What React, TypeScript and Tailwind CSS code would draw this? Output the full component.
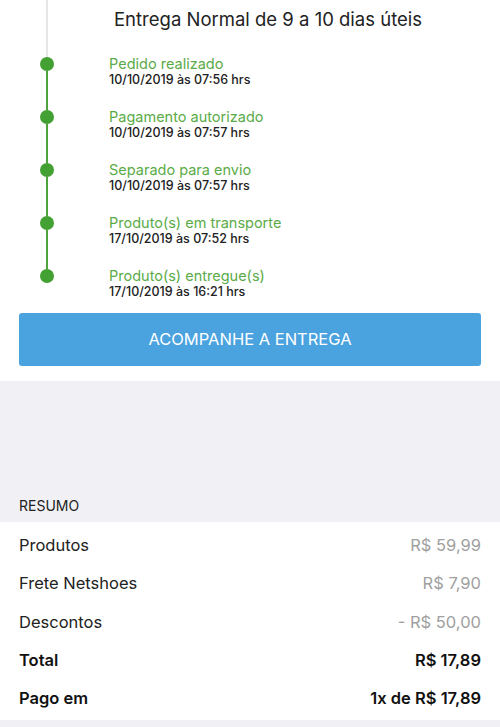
import React from "react";

type Step = { label: string; date: string };

const steps: Step[] = [
  { label: "Pedido realizado", date: "10/10/2019 às 07:56 hrs" },
  { label: "Pagamento autorizado", date: "10/10/2019 às 07:57 hrs" },
  { label: "Separado para envio", date: "10/10/2019 às 07:57 hrs" },
  { label: "Produto(s) em transporte", date: "17/10/2019 às 07:52 hrs" },
  { label: "Produto(s) entregue(s)", date: "17/10/2019 às 16:21 hrs" },
];

type Row = { label: string; value: string; strong?: boolean };

const summary: Row[] = [
  { label: "Produtos", value: "R$ 59,99" },
  { label: "Frete Netshoes", value: "R$ 7,90" },
  { label: "Descontos", value: "- R$ 50,00" },
  { label: "Total", value: "R$ 17,89", strong: true },
  { label: "Pago em", value: "1x de R$ 17,89", strong: true },
];

function TimelineStep({ step, first, last }: { step: Step; first: boolean; last: boolean }) {
  return (
    <div className="flex h-[53px]">
      <div className="flex w-[94px] shrink-0 flex-col items-center">
        <div className={`h-[17px] w-[2px] ${first ? "bg-[#e6e6e6]" : "bg-[#4ea43c]"}`} />
        <div className="h-[14px] w-[14px] shrink-0 rounded-full bg-[#43a032]" />
        <div className={`w-[2px] flex-1 ${last ? "" : "bg-[#4ea43c]"}`} />
      </div>
      <div className="pt-[16px] pl-[15px]">
        <div className="text-[14.5px] leading-[16px] text-[#5aab47]">{step.label}</div>
        <div className="text-[12.5px] font-medium leading-[16px] text-[#222]">{step.date}</div>
      </div>
    </div>
  );
}

export default function App() {
  return (
    <div className="min-h-[727px] w-[500px] bg-[#f0f0f5] font-['Inter',sans-serif]">
      <div className="bg-white pb-[15px]">
        <div className="flex h-10">
          <div className="flex w-[94px] shrink-0 justify-center">
            <div className="w-[2px] bg-[#e6e6e6]" />
          </div>
          <div className="flex items-center pl-[20px] text-[18.5px] text-[#222]">
            Entrega Normal de 9 a 10 dias úteis
          </div>
        </div>
        {steps.map((s, i) => (
          <TimelineStep key={s.label} step={s} first={i === 0} last={i === steps.length - 1} />
        ))}
        <div className="mx-[19px] mt-2 flex h-[53px] items-center justify-center rounded-[3px] bg-[#4aa3df] text-[16.5px] text-white">
          ACOMPANHE A ENTREGA
        </div>
      </div>

      <div className="flex h-[141px] items-end px-[19px] pb-[6px] text-[14px] text-[#222]">RESUMO</div>

      <div className="bg-white px-[19px] pt-[4px] pb-[2px]">
        {summary.map((r) => (
          <div key={r.label} className="flex h-[38.4px] items-center justify-between text-[16.5px]">
            <span className={r.strong ? "font-semibold text-[#111]" : "text-[#222]"}>{r.label}</span>
            <span className={r.strong ? "font-semibold text-[#111]" : "text-[#a0a0a0]"}>{r.value}</span>
          </div>
        ))}
      </div>
    </div>
  );
}
